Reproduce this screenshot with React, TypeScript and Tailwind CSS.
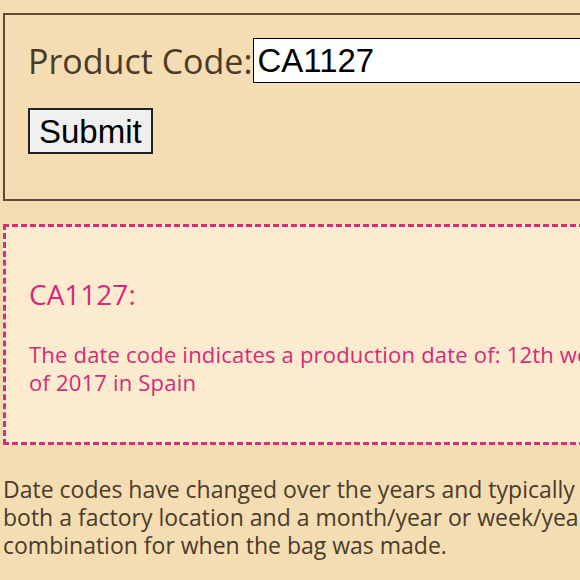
export default function App() {
  return (
    <div className="w-[580px] h-[580px] overflow-hidden bg-[#f4ddb2] font-['Open_Sans',sans-serif]">
      <div className="w-[900px] pl-[3px] pt-[13px]">
        {/* Lookup form */}
        <form
          className="border-2 border-[#5b4a36] h-[188px] pl-[23px] pt-[23px]"
          onSubmit={(e) => e.preventDefault()}
        >
          <div className="flex items-center">
            <label className="text-[34px] text-[#4b3a28] leading-none">Product Code:</label>
            <input
              defaultValue="CA1127"
              className="ml-[1px] w-[600px] h-[45px] border border-black bg-white px-[3px] text-[33px] text-black font-['Liberation_Sans',Arial,sans-serif] outline-none"
            />
          </div>
          <button
            type="submit"
            className="mt-[25px] h-[46px] px-[9px] bg-[#efefef] border-2 border-[#222] text-[33px] leading-none text-black font-['Liberation_Sans',Arial,sans-serif]"
          >
            Submit
          </button>
        </form>

        {/* Result */}
        <div className="mt-[23px] h-[221px] border-[3px] border-dashed border-[#d92d7a] bg-[#fdebd0] pl-[23px] pt-[53px] text-[#d42a78]">
          <h3 className="text-[28px] leading-none">CA1127:</h3>
          <p className="mt-[32px] w-[590px] text-[22px] tracking-[0.2px] leading-[28px]">
            The date code indicates a production date of: 12th week of 2017 in Spain
          </p>
        </div>

        <p className="mt-[30px] w-[680px] text-[23px] leading-[28px] text-[#4a3b2b]">
          Date codes have changed over the years and typically include both a factory location and a
          month/year or week/year combination for when the bag was made.
        </p>
      </div>
    </div>
  );
}
